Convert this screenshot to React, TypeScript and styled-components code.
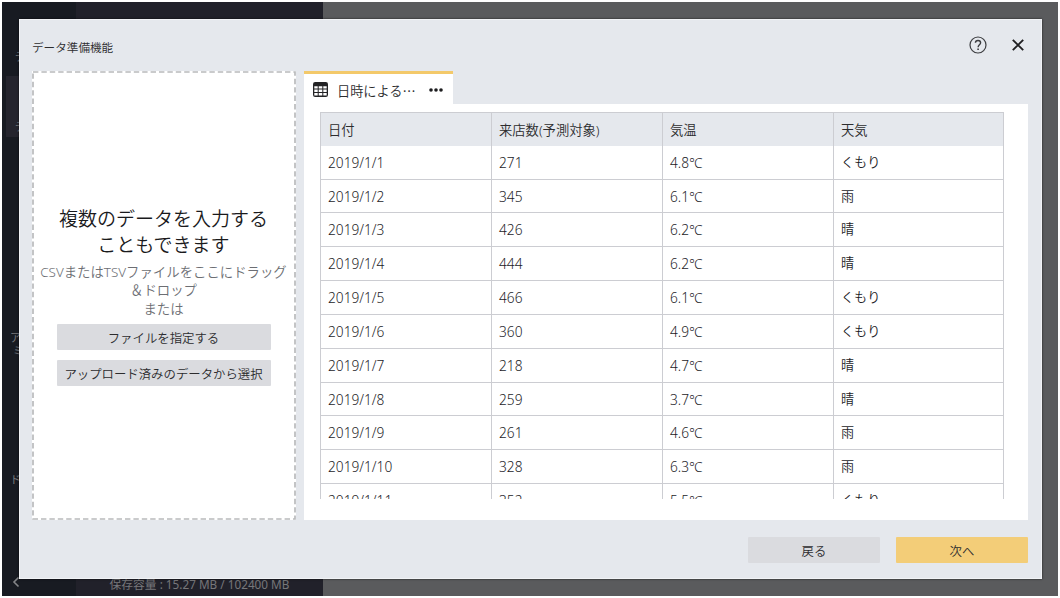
import React from "react";
import styled, { createGlobalStyle } from "styled-components";

const GlobalStyle = createGlobalStyle`
  * { box-sizing: border-box; }
  body {
    margin: 0;
    background: #fff;
    color: #2c2c2e;
    font-family: "Noto Sans", "Noto Sans CJK JP", sans-serif;
  }
  button { font-family: inherit; color: inherit; border: 0; padding: 0; }
`;

const Screen = styled.div`
  position: relative;
  width: 1060px;
  height: 598px;
  padding: 2px;
  overflow: hidden;
`;

const Backdrop = styled.div`
  display: flex;
  height: 594px;
  background: #5a5b5d;
`;

const Sidebar = styled.nav`
  display: flex;
  flex-direction: column;
  width: 74px;
  background: #181b22;
  color: #77787b;
  font-size: 11px;
  line-height: 13px;
`;

const SidebarItem = styled.div<{ $height: number; $indent: number; $active?: boolean }>`
  display: flex;
  flex-direction: column;
  justify-content: flex-end;
  height: ${(p) => p.$height}px;
  margin-left: 4px;
  margin-top: ${(p) => (p.$active ? 9 : 0)}px;
  padding: 0 0 4px ${(p) => p.$indent}px;
  background: ${(p) => (p.$active ? "#25252e" : "transparent")};
`;

const Collapse = styled.div`
  margin: auto 0 6px 10px;
  height: 14px;
`;

const ProjectList = styled.div`
  display: flex;
  align-items: flex-end;
  justify-content: center;
  width: 247px;
  padding-bottom: 4px;
  background: #21212a;
  color: #77777a;
  font-size: 11.75px;
  line-height: 16px;
  white-space: nowrap;
`;

const Dialog = styled.section`
  position: absolute;
  left: 19px;
  top: 19px;
  width: 1023px;
  height: 560px;
  padding: 0 13px 0 12px;
  display: flex;
  flex-direction: column;
  background: #e5e8ed;
  border: 1px solid #f1f3f6;
  box-shadow: 0 0 2px rgba(0, 0, 0, 0.7);
`;

const Header = styled.header`
  display: flex;
  align-items: center;
  height: 51px;
`;

const Title = styled.h1`
  flex: 1;
  margin: 3px 0 0;
  font-size: 11.6px;
  font-weight: 350;
`;

const HeaderIcon = styled.button`
  display: flex;
  width: 20px;
  height: 20px;
  margin: 0 0 2px 20px;
  align-items: center;
  justify-content: center;
  background: none;
`;

const Body = styled.div`
  display: flex;
  gap: 8px;
  height: 449px;
`;

const DropZone = styled.div`
  position: relative;
  display: flex;
  flex-direction: column;
  align-items: center;
  width: 264px;
  padding: 136px 1px 0 0;
  background: #fff;
  text-align: center;
  white-space: nowrap;
`;

const DashedOutline = styled.svg`
  position: absolute;
  inset: 0;
`;

const DropTitle = styled.h2`
  margin: 0;
  color: #1a1a1c;
  font-size: 19px;
  font-weight: 350;
  line-height: 25.5px;
`;

const DropHint = styled.p`
  margin: 5px 0 0;
  color: #6c6e73;
  font-size: 13.4px;
  font-weight: 350;
  line-height: 18.3px;
`;

const Button = styled.button<{ $primary?: boolean; $width: number }>`
  width: ${(p) => p.$width}px;
  height: 26px;
  padding-top: 3px;
  border-radius: 1px;
  background: ${(p) => (p.$primary ? "#f3cd78" : "#dadbdf")};
  font-size: 12.4px;
  font-weight: 350;
  line-height: 23px;
  white-space: nowrap;
`;

const DropActions = styled.div`
  display: flex;
  flex-direction: column;
  gap: 10px;
  margin-top: 6px;
`;

const Preview = styled.div`
  display: flex;
  flex-direction: column;
  width: 724px;
`;

const Tab = styled.div`
  display: flex;
  align-items: center;
  width: 149px;
  height: 33px;
  padding: 1px 10px 0 9px;
  background: #fff;
  border-top: 3px solid #f3c96a;
  font-size: 13.2px;
  font-weight: 350;
`;

const TabLabel = styled.span`
  flex: 1;
  margin-left: 9px;
  padding-top: 1px;
  white-space: nowrap;
`;

const PreviewPanel = styled.div`
  flex: 1;
  padding: 8px 24px 21px 16px;
  background: #fff;
`;

const TableViewport = styled.div`
  height: 387px;
  overflow: hidden;
`;

const Grid = styled.div`
  border: 1px solid #cccdd2;
  width: 684px;
`;

const Row = styled.div<{ $head?: boolean }>`
  display: grid;
  grid-template-columns: 170px 171px 171px 1fr;
  height: ${(p) => (p.$head ? 32.8 : 33.83)}px;
  background: ${(p) => (p.$head ? "#e5e8ed" : "#fff")};
  border-bottom: ${(p) => (p.$head ? "0" : "1px solid #cccdd2")};
`;

const Cell = styled.div`
  padding-left: 7px;
  border-left: 1px solid #cccdd2;
  font-size: 13.3px;
  font-weight: 350;
  line-height: 34px;
  white-space: nowrap;
  &:first-child { border-left: 0; }
`;

const Value = styled(Cell)`
  color: #1c1c1f;
  font-size: 13.7px;
  line-height: 33px;
  &:last-child { font-size: 13.1px; }
`;

const Footer = styled.footer`
  display: flex;
  justify-content: flex-end;
  gap: 16px;
  padding-top: 17px;
`;

const rows = [
  ["2019/1/1", "271", "4.8℃", "くもり"],
  ["2019/1/2", "345", "6.1℃", "雨"],
  ["2019/1/3", "426", "6.2℃", "晴"],
  ["2019/1/4", "444", "6.2℃", "晴"],
  ["2019/1/5", "466", "6.1℃", "くもり"],
  ["2019/1/6", "360", "4.9℃", "くもり"],
  ["2019/1/7", "218", "4.7℃", "晴"],
  ["2019/1/8", "259", "3.7℃", "晴"],
  ["2019/1/9", "261", "4.6℃", "雨"],
  ["2019/1/10", "328", "6.3℃", "雨"],
  ["2019/1/11", "352", "5.5℃", "くもり"],
];

const HelpIcon = () => (
  <svg width="18" height="18" viewBox="0 0 18 18" fill="none" stroke="#3c3d40" strokeWidth="1.2">
    <circle cx="9" cy="9" r="8" />
    <path d="M6.4 6.7C6.5 3.7 11.6 3.8 11.6 6.7C11.6 8.7 9.1 8.8 9.1 11.2" strokeWidth="1.4" />
    <path d="M9.1 12.4v1.6" strokeWidth="1.6" />
  </svg>
);

const CloseIcon = () => (
  <svg width="12" height="12" viewBox="0 0 12 12" stroke="#1f1f21" strokeWidth="1.9">
    <path d="M0.8 0.8L11.2 11.2M11.2 0.8L0.8 11.2" />
  </svg>
);

const TableIcon = () => (
  <svg width="15" height="15" viewBox="0 0 15 15">
    <rect width="15" height="15" rx="2.2" fill="#232325" />
    <path
      fill="#fff"
      d="M1.3 4.2h3.4v2.4H1.3zM5.7 4.2h3.6v2.4H5.7zM10.3 4.2h3.4v2.4h-3.4zM1.3 7.6h3.4v2.4H1.3zM5.7 7.6h3.6v2.4H5.7zM10.3 7.6h3.4v2.4h-3.4zM1.3 11h3.4v2.6H1.3zM5.7 11h3.6v2.6H5.7zM10.3 11h3.4v2.6h-3.4z"
    />
  </svg>
);

const MoreIcon = () => (
  <svg width="14" height="4" viewBox="0 0 14 4" fill="#1d1d1f">
    <circle cx="2" cy="2" r="1.8" />
    <circle cx="7" cy="2" r="1.8" />
    <circle cx="12" cy="2" r="1.8" />
  </svg>
);

export default function App() {
  return (
    <Screen>
      <GlobalStyle />
      <Backdrop>
        <Sidebar>
          <SidebarItem $height={65} $indent={9}>デ</SidebarItem>
          <SidebarItem $height={61} $indent={9} $active>デ</SidebarItem>
          <SidebarItem $height={224} $indent={4}>
            <span>ア</span>
            <span>&nbsp;ミ</span>
          </SidebarItem>
          <SidebarItem $height={129} $indent={4}>ド</SidebarItem>
          <Collapse>
            <svg width="8" height="12" viewBox="0 0 8 12" fill="none" stroke="#858689" strokeWidth="1.6">
              <path d="M6.5 1.5L2 6L6.5 10.5" />
            </svg>
          </Collapse>
        </Sidebar>
        <ProjectList>保存容量 : 15.27 MB / 102400 MB</ProjectList>
      </Backdrop>
      <Dialog>
        <Header>
          <Title>データ準備機能</Title>
          <HeaderIcon aria-label="ヘルプ"><HelpIcon /></HeaderIcon>
          <HeaderIcon aria-label="閉じる"><CloseIcon /></HeaderIcon>
        </Header>
        <Body>
          <DropZone>
            <DashedOutline width="264" height="449">
              <rect x="1" y="1" width="262" height="447" fill="none" stroke="#b9babc" strokeWidth="1.7" strokeDasharray="5.4 3" />
            </DashedOutline>
            <DropTitle>複数のデータを入力する<br />こともできます</DropTitle>
            <DropHint>CSVまたはTSVファイルをここにドラッグ<br />＆ドロップ<br />または</DropHint>
            <DropActions>
              <Button $width={214}>ファイルを指定する</Button>
              <Button $width={214}>アップロード済みのデータから選択</Button>
            </DropActions>
          </DropZone>
          <Preview>
            <Tab>
              <TableIcon />
              <TabLabel>日時による⋯</TabLabel>
              <MoreIcon />
            </Tab>
            <PreviewPanel>
              <TableViewport>
                <Grid>
                  <Row $head>
                    <Cell>日付</Cell>
                    <Cell>来店数(予測対象)</Cell>
                    <Cell>気温</Cell>
                    <Cell>天気</Cell>
                  </Row>
                  {rows.map((row) => (
                    <Row key={row[0]}>
                      {row.map((value, i) => <Value key={i}>{value}</Value>)}
                    </Row>
                  ))}
                </Grid>
              </TableViewport>
            </PreviewPanel>
          </Preview>
        </Body>
        <Footer>
          <Button $width={132}>戻る</Button>
          <Button $width={132} $primary>次へ</Button>
        </Footer>
      </Dialog>
    </Screen>
  );
}
